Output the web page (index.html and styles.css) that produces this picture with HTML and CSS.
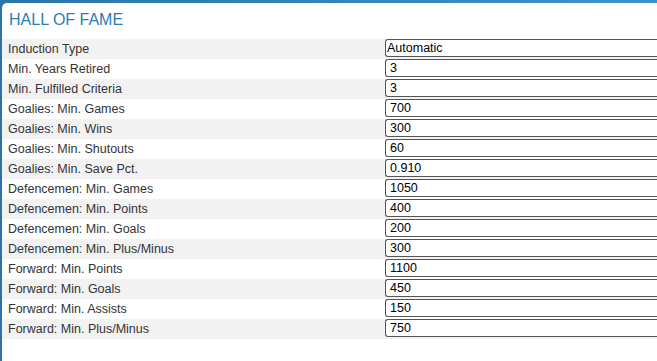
FILE: index.html
```html
<!DOCTYPE html>
<html lang="en">

<head>
    <meta charset="UTF-8">
    <meta name="viewport" content="width=device-width, initial-scale=1.0">
    <title>Hall of Fame</title>
    <link rel="stylesheet" href="styles.css">
</head>

<body>
    <div class="panel">
        <h1>HALL OF FAME</h1>

        <div class="settings">
            <div class="row">
                <label for="inductionType">Induction Type</label>
                <select id="inductionType" class="field select">
                    <option>Automatic</option>
                    <option>Manual</option>
                </select>
            </div>
            <div class="row">
                <label for="yearsRetired">Min. Years Retired</label>
                <input type="text" id="yearsRetired" class="field" value="3">
            </div>
            <div class="row">
                <label for="fulfilled">Min. Fulfilled Criteria</label>
                <input type="text" id="fulfilled" class="field" value="3">
            </div>
            <div class="row">
                <label for="gGames">Goalies: Min. Games</label>
                <input type="text" id="gGames" class="field" value="700">
            </div>
            <div class="row">
                <label for="gWins">Goalies: Min. Wins</label>
                <input type="text" id="gWins" class="field" value="300">
            </div>
            <div class="row">
                <label for="gShutouts">Goalies: Min. Shutouts</label>
                <input type="text" id="gShutouts" class="field" value="60">
            </div>
            <div class="row">
                <label for="gSave">Goalies: Min. Save Pct.</label>
                <input type="text" id="gSave" class="field" value="0.910">
            </div>
            <div class="row">
                <label for="dGames">Defencemen: Min. Games</label>
                <input type="text" id="dGames" class="field" value="1050">
            </div>
            <div class="row">
                <label for="dPoints">Defencemen: Min. Points</label>
                <input type="text" id="dPoints" class="field" value="400">
            </div>
            <div class="row">
                <label for="dGoals">Defencemen: Min. Goals</label>
                <input type="text" id="dGoals" class="field" value="200">
            </div>
            <div class="row">
                <label for="dPlus">Defencemen: Min. Plus/Minus</label>
                <input type="text" id="dPlus" class="field" value="300">
            </div>
            <div class="row">
                <label for="fPoints">Forward: Min. Points</label>
                <input type="text" id="fPoints" class="field" value="1100">
            </div>
            <div class="row">
                <label for="fGoals">Forward: Min. Goals</label>
                <input type="text" id="fGoals" class="field" value="450">
            </div>
            <div class="row">
                <label for="fAssists">Forward: Min. Assists</label>
                <input type="text" id="fAssists" class="field" value="150">
            </div>
            <div class="row">
                <label for="fPlus">Forward: Min. Plus/Minus</label>
                <input type="text" id="fPlus" class="field" value="750">
            </div>
        </div>
    </div>
</body>

</html>
```

FILE: styles.css
```css
html,
body {
    height: 100%;
}

body {
    margin: 0;
    overflow: hidden;
    font-family: "Liberation Sans", Arial, sans-serif;
    font-size: 12.5px;
    color: #333;
    background: linear-gradient(to right, #2c74a8, #3d93c9);
}

.panel {
    margin: 3px 0 0 2px;
    min-height: 100%;
    background-color: #fff;
    border-top-left-radius: 5px;
}

h1 {
    margin: 0;
    padding: 8px 0 0 7px;
    height: 28px;
    font-size: 16px;
    font-weight: normal;
    color: #2b7db1;
}

.row {
    display: flex;
    align-items: center;
    height: 20px;
}

.row:nth-child(odd) {
    background-color: #f2f2f2;
}

.row label {
    width: 377px;
    padding-left: 6px;
    flex-shrink: 0;
}

/* inputs run on past the right edge of the panel */
.field {
    flex: 1;
    min-width: 0;
    align-self: flex-start;
    height: 18px;
    margin: 0;
    padding: 0 4px;
    box-sizing: border-box;
    border: 1px solid #555;
    border-right: none;
    border-radius: 3px 0 0 3px;
    background-color: #fff;
    font-family: "Liberation Sans", Arial, sans-serif;
    font-size: 12.5px;
    color: #000;
}

.field:focus {
    outline: none;
    border-color: #2b7db1;
}

.select {
    appearance: none;
    padding: 0 1px;
}
```
